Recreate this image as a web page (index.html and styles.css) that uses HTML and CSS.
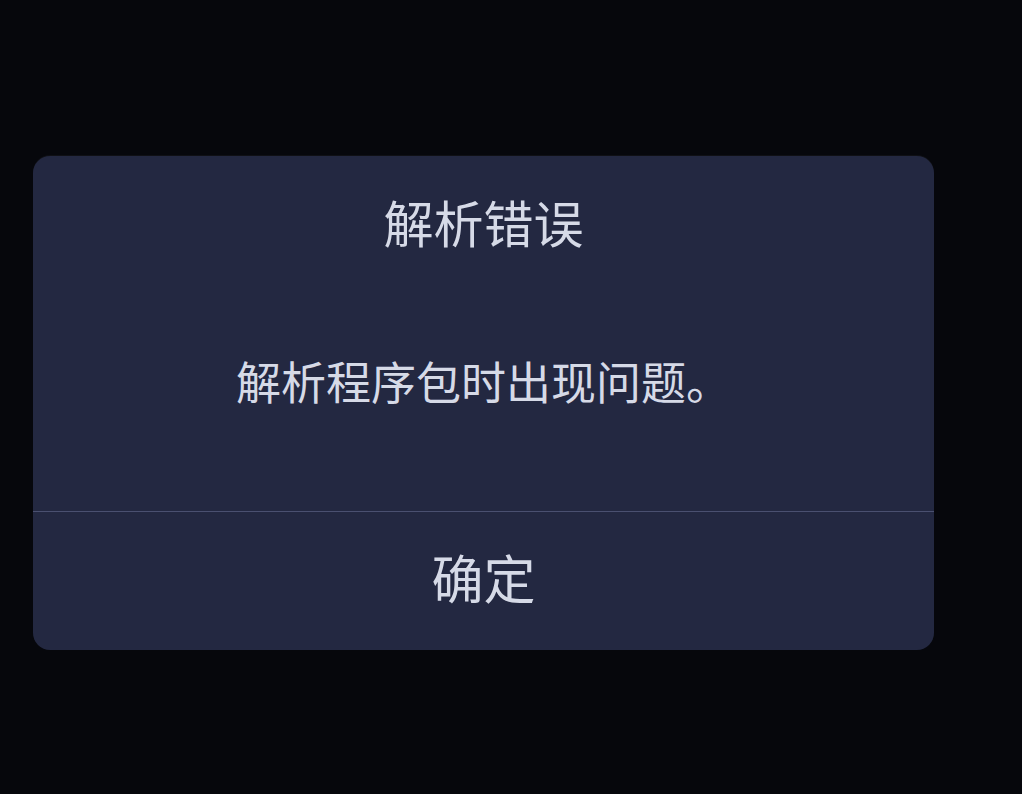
FILE: index.html
```html
<!DOCTYPE html>
<html lang="zh-CN">
<head>
    <meta charset="UTF-8">
    <meta name="viewport" content="width=device-width, initial-scale=1.0">
    <title>解析错误</title>
    <link rel="stylesheet" href="styles.css">
</head>
<body>
    <div class="overlay">
        <!-- Error dialog -->
        <div class="dialog">
            <div class="dialog-title">解析错误</div>
            <div class="dialog-message">解析程序包时出现问题。</div>
            <div class="dialog-actions">
                <button class="dialog-button">确定</button>
            </div>
        </div>
    </div>
</body>
</html>
```

FILE: styles.css
```css
* {
    margin: 0;
    padding: 0;
    box-sizing: border-box;
}

html, body {
    height: 100%;
}

body {
    font-family: "Noto Sans CJK SC", "Noto Sans", sans-serif;
    background-color: #06070c;
    color: #d6dae7;
}

.overlay {
    padding: 156px 0 0 33px;
}

.dialog {
    width: 901px;
    background-color: #232841;
    border-radius: 17px;
    box-shadow: 0 -1px 0 rgba(255,255,255,0.04);
    overflow: hidden;
}

.dialog-title {
    text-align: center;
    font-size: 50px;
    line-height: 68px;
    padding-top: 31px;
}

.dialog-message {
    text-align: center;
    font-size: 45px;
    line-height: 60px;
    padding-top: 96px;
    padding-bottom: 100px;
    border-bottom: 1px solid #4a5070;
}

.dialog-actions {
    height: 138px;
    padding-bottom: 8px;
    display: flex;
    align-items: center;
    justify-content: center;
}

.dialog-button {
    font-family: inherit;
    font-size: 52px;
    line-height: 68px;
    color: #d6dae7;
    background: none;
    border: none;
    cursor: pointer;
}
```
